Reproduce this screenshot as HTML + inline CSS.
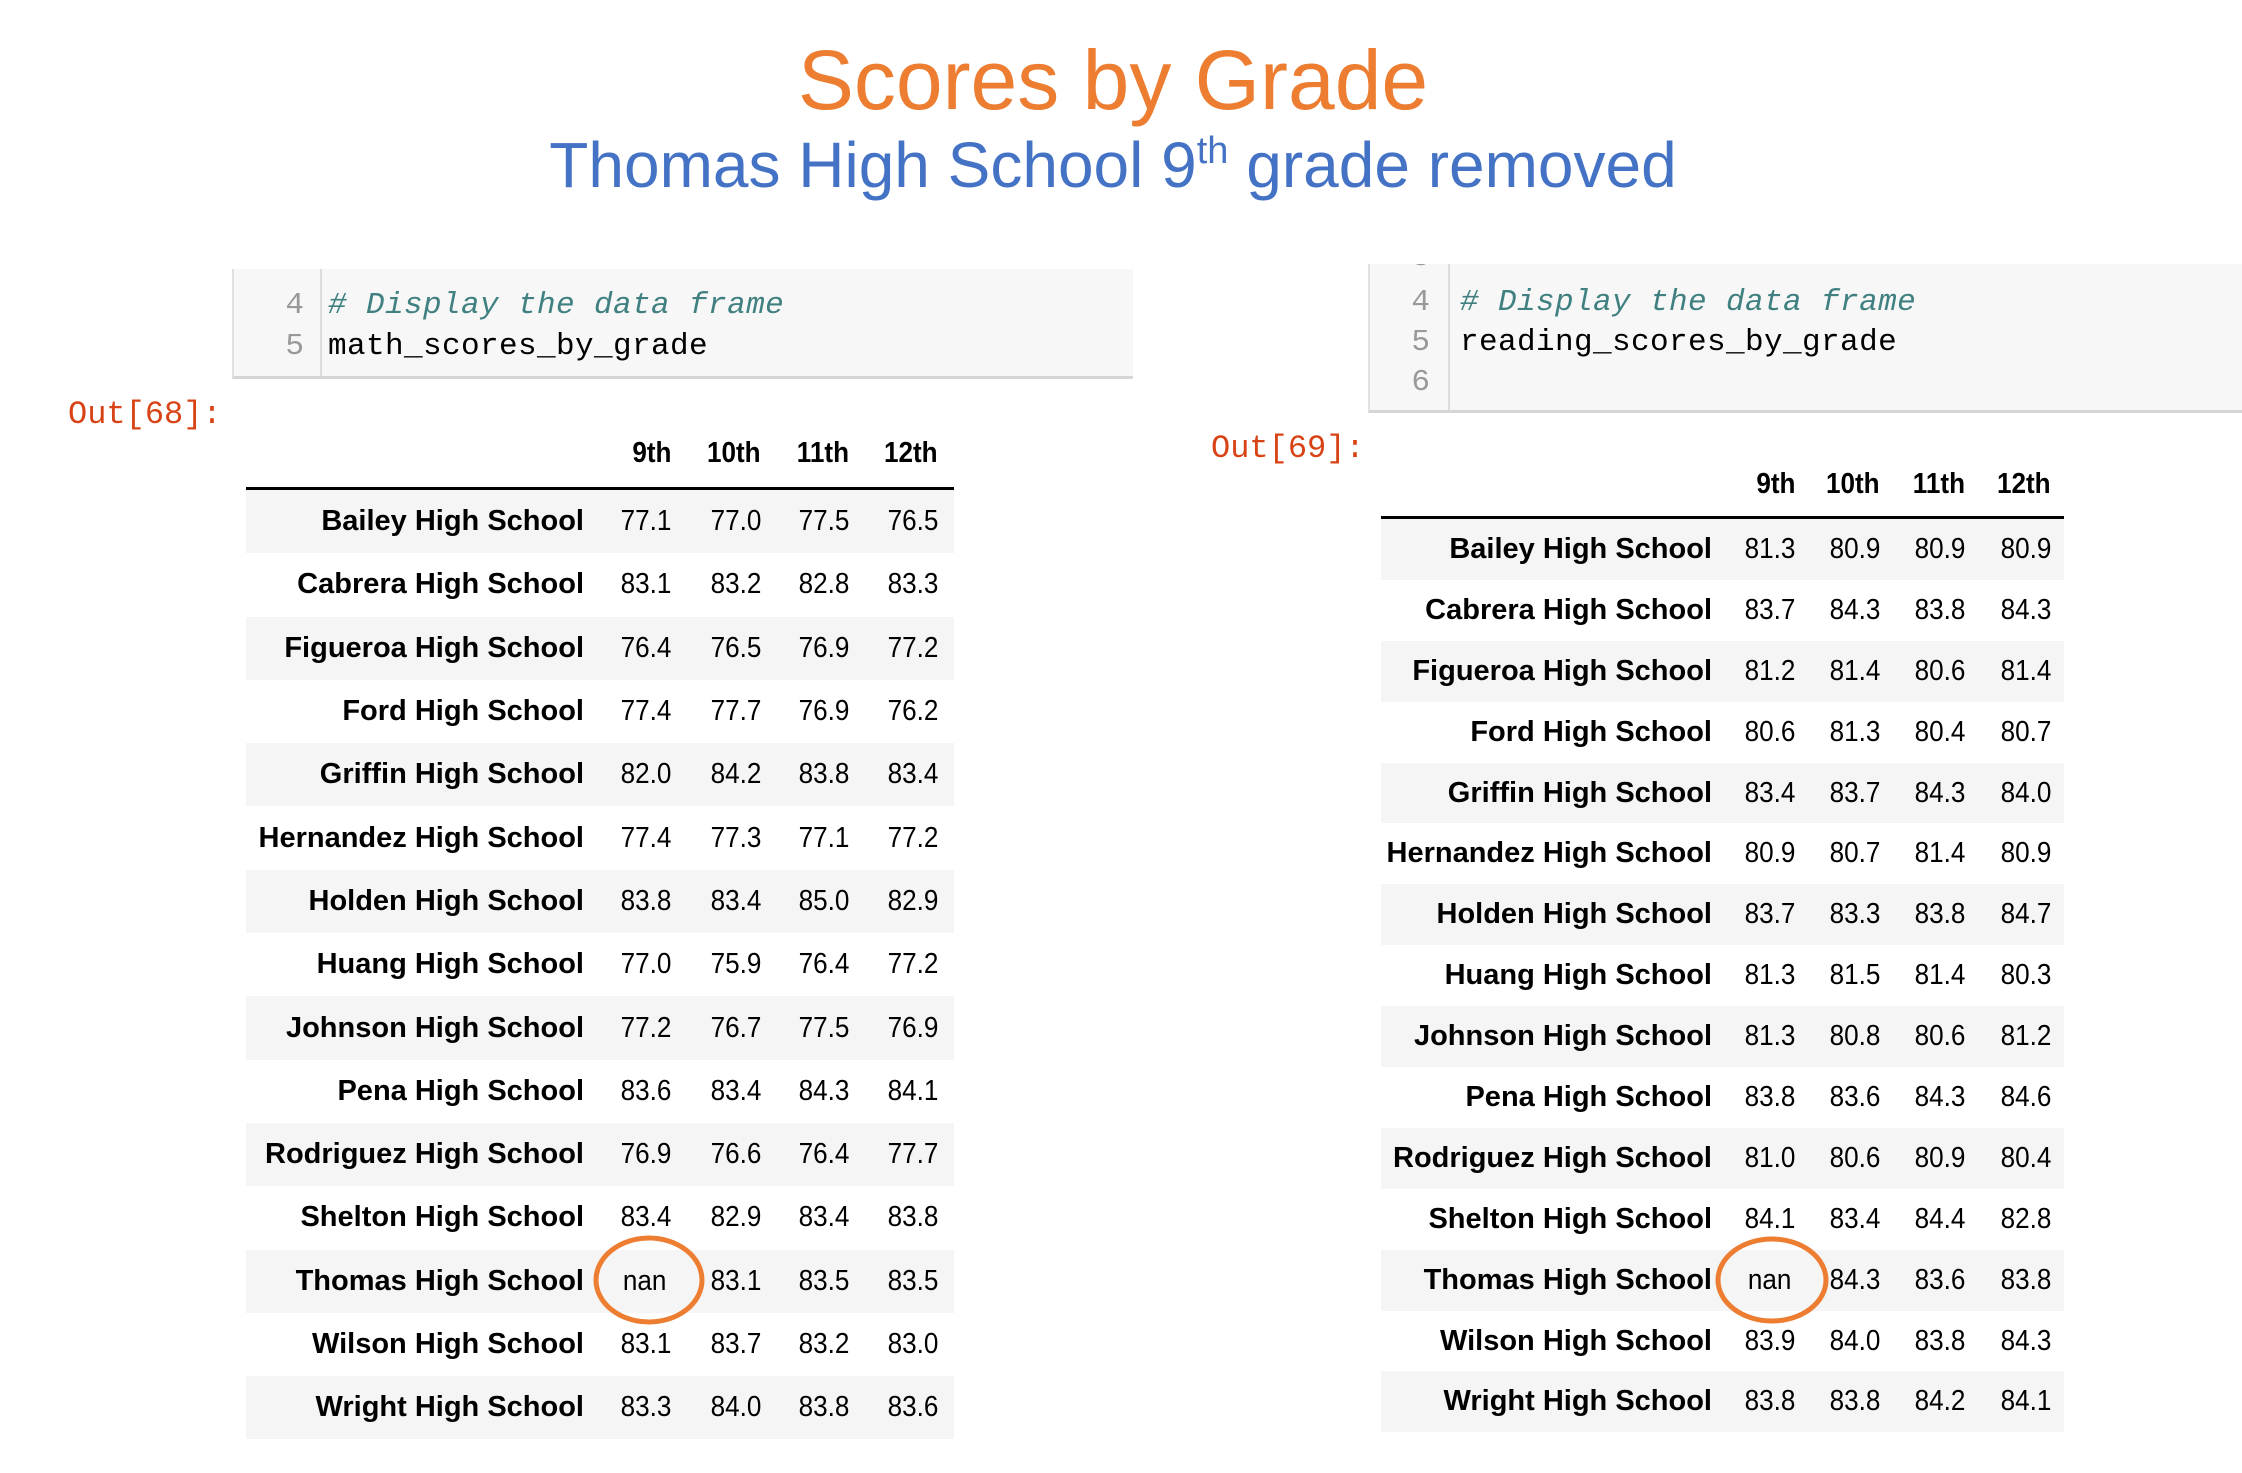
<!DOCTYPE html>
<html><head><meta charset="utf-8"><style>
*{margin:0;padding:0;box-sizing:border-box}
body{width:2242px;height:1473px;background:#fff;position:relative;overflow:hidden;font-family:"Liberation Sans",Arial,sans-serif}
.abs{position:absolute}
.t1{left:0;width:2226px;text-align:center;top:30px;font-size:84px;color:#ED7D31;line-height:100px}
.t2{left:0;width:2226px;text-align:center;top:125px;font-size:64px;color:#4472C4;line-height:80px}
.t2 sup{font-size:38px;vertical-align:0;position:relative;top:-24px}
.code{background:#f7f7f7;border:2px solid #e0e0e0;border-top:none;border-right:none;border-bottom:3px solid #d6d6d6;font-family:"Liberation Mono",monospace;font-size:31px;overflow:hidden}
.gut{position:absolute;top:0;bottom:0;border-right:2px solid #ddd}
.ln{position:absolute;color:#999;text-align:right;width:40px;line-height:41px}
.cl{position:absolute;line-height:41px;white-space:pre;letter-spacing:0.4px}
.cm{color:#408080;font-style:italic}
.out{font-family:"Liberation Mono",monospace;font-size:32px;color:#D84315}
.tbl{position:absolute;font-size:29px;color:#000}
.row{display:flex;height:63.3px;align-items:center}
.tbl.r .row{height:60.9px}
.row.g{background:#f5f5f5}
.row>span{text-align:right;display:block;white-space:nowrap}
.row>span:first-child{font-weight:bold}
.row>span:first-child .sq{transform:none}
.hd{display:flex;font-weight:bold;border-bottom:3px solid #000;align-items:center}
.hd>span{text-align:right;display:block}
.sq{display:inline-block;transform:scaleX(.9);transform-origin:right center}
</style></head><body>
<div class="abs t1">Scores by Grade</div>
<div class="abs t2">Thomas High School 9<sup>th</sup> grade removed</div>

<div class="abs code" style="left:232px;top:269px;width:901px;height:110px">
 <div class="gut" style="left:0;width:88px"></div>
 <div class="ln" style="left:30px;top:-30px">3</div>
 <div class="ln" style="left:30px;top:16px">4</div>
 <div class="ln" style="left:30px;top:57px">5</div>
 <div class="cl cm" style="left:94px;top:16px"># Display the data frame</div>
 <div class="cl" style="left:94px;top:57px">math_scores_by_grade</div>
</div>
<div class="abs out" style="left:68px;top:396px">Out[68]:</div>

<div class="abs code" style="left:1368px;top:264px;width:874px;height:149px">
 <div class="gut" style="left:0;width:80px"></div>
 <div class="ln" style="left:20px;top:-27px">3</div>
 <div class="ln" style="left:20px;top:18px">4</div>
 <div class="ln" style="left:20px;top:58px">5</div>
 <div class="ln" style="left:20px;top:98px">6</div>
 <div class="cl cm" style="left:90px;top:18px"># Display the data frame</div>
 <div class="cl" style="left:90px;top:58px">reading_scores_by_grade</div>
</div>
<div class="abs out" style="left:1211px;top:430px">Out[69]:</div>

<div class="tbl" style="left:246px;top:420px;width:708px">
<div class="hd" style="height:70px"><span style="width:338px"></span><span style="width:87px"><span class="sq">9th</span></span><span style="width:90px"><span class="sq">10th</span></span><span style="width:88px"><span class="sq">11th</span></span><span style="width:89px"><span class="sq">12th</span></span></div>
<div class="row g"><span style="width:338px"><span class="sq">Bailey High School</span></span><span style="width:87px"><span class="sq">77.1</span></span><span style="width:90px"><span class="sq">77.0</span></span><span style="width:88px"><span class="sq">77.5</span></span><span style="width:89px"><span class="sq">76.5</span></span></div>
<div class="row"><span style="width:338px"><span class="sq">Cabrera High School</span></span><span style="width:87px"><span class="sq">83.1</span></span><span style="width:90px"><span class="sq">83.2</span></span><span style="width:88px"><span class="sq">82.8</span></span><span style="width:89px"><span class="sq">83.3</span></span></div>
<div class="row g"><span style="width:338px"><span class="sq">Figueroa High School</span></span><span style="width:87px"><span class="sq">76.4</span></span><span style="width:90px"><span class="sq">76.5</span></span><span style="width:88px"><span class="sq">76.9</span></span><span style="width:89px"><span class="sq">77.2</span></span></div>
<div class="row"><span style="width:338px"><span class="sq">Ford High School</span></span><span style="width:87px"><span class="sq">77.4</span></span><span style="width:90px"><span class="sq">77.7</span></span><span style="width:88px"><span class="sq">76.9</span></span><span style="width:89px"><span class="sq">76.2</span></span></div>
<div class="row g"><span style="width:338px"><span class="sq">Griffin High School</span></span><span style="width:87px"><span class="sq">82.0</span></span><span style="width:90px"><span class="sq">84.2</span></span><span style="width:88px"><span class="sq">83.8</span></span><span style="width:89px"><span class="sq">83.4</span></span></div>
<div class="row"><span style="width:338px"><span class="sq">Hernandez High School</span></span><span style="width:87px"><span class="sq">77.4</span></span><span style="width:90px"><span class="sq">77.3</span></span><span style="width:88px"><span class="sq">77.1</span></span><span style="width:89px"><span class="sq">77.2</span></span></div>
<div class="row g"><span style="width:338px"><span class="sq">Holden High School</span></span><span style="width:87px"><span class="sq">83.8</span></span><span style="width:90px"><span class="sq">83.4</span></span><span style="width:88px"><span class="sq">85.0</span></span><span style="width:89px"><span class="sq">82.9</span></span></div>
<div class="row"><span style="width:338px"><span class="sq">Huang High School</span></span><span style="width:87px"><span class="sq">77.0</span></span><span style="width:90px"><span class="sq">75.9</span></span><span style="width:88px"><span class="sq">76.4</span></span><span style="width:89px"><span class="sq">77.2</span></span></div>
<div class="row g"><span style="width:338px"><span class="sq">Johnson High School</span></span><span style="width:87px"><span class="sq">77.2</span></span><span style="width:90px"><span class="sq">76.7</span></span><span style="width:88px"><span class="sq">77.5</span></span><span style="width:89px"><span class="sq">76.9</span></span></div>
<div class="row"><span style="width:338px"><span class="sq">Pena High School</span></span><span style="width:87px"><span class="sq">83.6</span></span><span style="width:90px"><span class="sq">83.4</span></span><span style="width:88px"><span class="sq">84.3</span></span><span style="width:89px"><span class="sq">84.1</span></span></div>
<div class="row g"><span style="width:338px"><span class="sq">Rodriguez High School</span></span><span style="width:87px"><span class="sq">76.9</span></span><span style="width:90px"><span class="sq">76.6</span></span><span style="width:88px"><span class="sq">76.4</span></span><span style="width:89px"><span class="sq">77.7</span></span></div>
<div class="row"><span style="width:338px"><span class="sq">Shelton High School</span></span><span style="width:87px"><span class="sq">83.4</span></span><span style="width:90px"><span class="sq">82.9</span></span><span style="width:88px"><span class="sq">83.4</span></span><span style="width:89px"><span class="sq">83.8</span></span></div>
<div class="row g"><span style="width:338px"><span class="sq">Thomas High School</span></span><span style="width:87px;padding-right:5px"><span class="sq">nan</span></span><span style="width:90px"><span class="sq">83.1</span></span><span style="width:88px"><span class="sq">83.5</span></span><span style="width:89px"><span class="sq">83.5</span></span></div>
<div class="row"><span style="width:338px"><span class="sq">Wilson High School</span></span><span style="width:87px"><span class="sq">83.1</span></span><span style="width:90px"><span class="sq">83.7</span></span><span style="width:88px"><span class="sq">83.2</span></span><span style="width:89px"><span class="sq">83.0</span></span></div>
<div class="row g"><span style="width:338px"><span class="sq">Wright High School</span></span><span style="width:87px"><span class="sq">83.3</span></span><span style="width:90px"><span class="sq">84.0</span></span><span style="width:88px"><span class="sq">83.8</span></span><span style="width:89px"><span class="sq">83.6</span></span></div>
</div>

<div class="tbl r" style="left:1381px;top:452px;width:683px">
<div class="hd" style="height:67px"><span style="width:331px"></span><span style="width:83px"><span class="sq">9th</span></span><span style="width:85px"><span class="sq">10th</span></span><span style="width:85px"><span class="sq">11th</span></span><span style="width:86px"><span class="sq">12th</span></span></div>
<div class="row g"><span style="width:331px"><span class="sq">Bailey High School</span></span><span style="width:83px"><span class="sq">81.3</span></span><span style="width:85px"><span class="sq">80.9</span></span><span style="width:85px"><span class="sq">80.9</span></span><span style="width:86px"><span class="sq">80.9</span></span></div>
<div class="row"><span style="width:331px"><span class="sq">Cabrera High School</span></span><span style="width:83px"><span class="sq">83.7</span></span><span style="width:85px"><span class="sq">84.3</span></span><span style="width:85px"><span class="sq">83.8</span></span><span style="width:86px"><span class="sq">84.3</span></span></div>
<div class="row g"><span style="width:331px"><span class="sq">Figueroa High School</span></span><span style="width:83px"><span class="sq">81.2</span></span><span style="width:85px"><span class="sq">81.4</span></span><span style="width:85px"><span class="sq">80.6</span></span><span style="width:86px"><span class="sq">81.4</span></span></div>
<div class="row"><span style="width:331px"><span class="sq">Ford High School</span></span><span style="width:83px"><span class="sq">80.6</span></span><span style="width:85px"><span class="sq">81.3</span></span><span style="width:85px"><span class="sq">80.4</span></span><span style="width:86px"><span class="sq">80.7</span></span></div>
<div class="row g"><span style="width:331px"><span class="sq">Griffin High School</span></span><span style="width:83px"><span class="sq">83.4</span></span><span style="width:85px"><span class="sq">83.7</span></span><span style="width:85px"><span class="sq">84.3</span></span><span style="width:86px"><span class="sq">84.0</span></span></div>
<div class="row"><span style="width:331px"><span class="sq">Hernandez High School</span></span><span style="width:83px"><span class="sq">80.9</span></span><span style="width:85px"><span class="sq">80.7</span></span><span style="width:85px"><span class="sq">81.4</span></span><span style="width:86px"><span class="sq">80.9</span></span></div>
<div class="row g"><span style="width:331px"><span class="sq">Holden High School</span></span><span style="width:83px"><span class="sq">83.7</span></span><span style="width:85px"><span class="sq">83.3</span></span><span style="width:85px"><span class="sq">83.8</span></span><span style="width:86px"><span class="sq">84.7</span></span></div>
<div class="row"><span style="width:331px"><span class="sq">Huang High School</span></span><span style="width:83px"><span class="sq">81.3</span></span><span style="width:85px"><span class="sq">81.5</span></span><span style="width:85px"><span class="sq">81.4</span></span><span style="width:86px"><span class="sq">80.3</span></span></div>
<div class="row g"><span style="width:331px"><span class="sq">Johnson High School</span></span><span style="width:83px"><span class="sq">81.3</span></span><span style="width:85px"><span class="sq">80.8</span></span><span style="width:85px"><span class="sq">80.6</span></span><span style="width:86px"><span class="sq">81.2</span></span></div>
<div class="row"><span style="width:331px"><span class="sq">Pena High School</span></span><span style="width:83px"><span class="sq">83.8</span></span><span style="width:85px"><span class="sq">83.6</span></span><span style="width:85px"><span class="sq">84.3</span></span><span style="width:86px"><span class="sq">84.6</span></span></div>
<div class="row g"><span style="width:331px"><span class="sq">Rodriguez High School</span></span><span style="width:83px"><span class="sq">81.0</span></span><span style="width:85px"><span class="sq">80.6</span></span><span style="width:85px"><span class="sq">80.9</span></span><span style="width:86px"><span class="sq">80.4</span></span></div>
<div class="row"><span style="width:331px"><span class="sq">Shelton High School</span></span><span style="width:83px"><span class="sq">84.1</span></span><span style="width:85px"><span class="sq">83.4</span></span><span style="width:85px"><span class="sq">84.4</span></span><span style="width:86px"><span class="sq">82.8</span></span></div>
<div class="row g"><span style="width:331px"><span class="sq">Thomas High School</span></span><span style="width:83px;padding-right:4px"><span class="sq">nan</span></span><span style="width:85px"><span class="sq">84.3</span></span><span style="width:85px"><span class="sq">83.6</span></span><span style="width:86px"><span class="sq">83.8</span></span></div>
<div class="row"><span style="width:331px"><span class="sq">Wilson High School</span></span><span style="width:83px"><span class="sq">83.9</span></span><span style="width:85px"><span class="sq">84.0</span></span><span style="width:85px"><span class="sq">83.8</span></span><span style="width:86px"><span class="sq">84.3</span></span></div>
<div class="row g"><span style="width:331px"><span class="sq">Wright High School</span></span><span style="width:83px"><span class="sq">83.8</span></span><span style="width:85px"><span class="sq">83.8</span></span><span style="width:85px"><span class="sq">84.2</span></span><span style="width:86px"><span class="sq">84.1</span></span></div>
</div>

<svg class="abs" style="left:0;top:0" width="2242" height="1473">
 <ellipse cx="649" cy="1280" rx="53" ry="42" fill="none" stroke="#ED7D31" stroke-width="5"/>
 <ellipse cx="1772" cy="1280" rx="54" ry="41" fill="none" stroke="#ED7D31" stroke-width="5"/>
</svg>
</body></html>
